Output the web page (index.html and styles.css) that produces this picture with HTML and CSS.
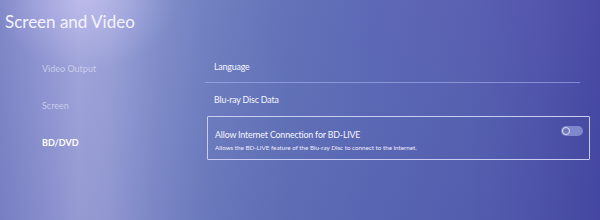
FILE: index.html
```html
<!DOCTYPE html>
<html>
<head>
<meta charset="utf-8">
<link rel="stylesheet" href="styles.css">
</head>
<body>
<div class="screen">
  <div class="glare"></div>
  <h1 class="title">Screen and Video</h1>
  <div class="main">
    <nav class="nav">
      <div class="nav-item">Video Output</div>
      <div class="nav-item">Screen</div>
      <div class="nav-item active">BD/DVD</div>
    </nav>
    <section class="content">
      <div class="row">Language</div>
      <div class="divider"></div>
      <div class="row row2">Blu-ray Disc Data</div>
      <div class="card">
        <div class="card-text">
          <div class="card-title">Allow Internet Connection for BD-LIVE</div>
          <div class="card-desc">Allows the BD-LIVE feature of the Blu-ray Disc to connect to the internet.</div>
        </div>
        <div class="toggle"><div class="knob"></div></div>
      </div>
    </section>
  </div>
</div>
</body>
</html>
```
FILE: styles.css
```css
html, body {
  margin: 0;
  padding: 0;
}
body {
  width: 600px;
  height: 220px;
  overflow: hidden;
  font-family: Lato, "Open Sans", sans-serif;
}
.screen {
  position: relative;
  width: 600px;
  height: 220px;
  overflow: hidden;
  background:
    linear-gradient(180deg, rgba(70,60,160,0) 0%, rgba(40,40,140,0.10) 100%),
    linear-gradient(90deg, #8088c8 0%, #939ad4 8%, #a2a7db 13%, #9ca3d8 18%, #8390cb 26%, #7080c0 35%, #6374b9 48%, #5d6cb6 62%, #5864b2 78%, #5157ab 90%, #474aa3 100%);
}
.glare {
  position: absolute;
  left: 0;
  top: 0;
  width: 600px;
  height: 220px;
  background:
    radial-gradient(ellipse 90px 70px at 85px 0px, rgba(215,205,250,0.5) 0%, rgba(215,205,250,0) 100%),
    radial-gradient(ellipse 260px 120px at 480px 0px, rgba(100,80,180,0.18) 0%, rgba(100,80,180,0) 100%);
  pointer-events: none;
}
.title {
  position: relative;
  margin: 0;
  padding: 10px 0 0 5px;
  font-size: 17px;
  line-height: 24px;
  font-weight: 400;
  color: #f4f3ff;
}
.main {
  position: relative;
  display: flex;
  margin-top: 16px;
}
.nav {
  width: 207px;
  padding-left: 42px;
  box-sizing: border-box;
  display: flex;
  flex-direction: column;
}
.nav-item {
  height: 37px;
  display: flex;
  align-items: center;
  font-size: 9px;
  color: #d4d5f0;
  opacity: 0.85;
}
.nav-item.active {
  color: #ffffff;
  opacity: 1;
  font-weight: 700;
}
.content {
  width: 383px;
  display: flex;
  flex-direction: column;
}
.row {
  height: 32px;
  padding-left: 7px;
  display: flex;
  align-items: center;
  font-size: 8.8px;
  letter-spacing: -0.15px;
  color: #f6f6ff;
}
.row2 {
  height: 33px;
}
.divider {
  height: 1px;
  margin-left: -2px;
  width: 375px;
  background: rgba(170,180,240,0.6);
}
.card {
  height: 44px;
  box-sizing: border-box;
  border: 1.5px solid #c9cdf2;
  border-radius: 1px;
  display: flex;
  justify-content: space-between;
  padding: 0 6px 0 7px;
}
.card-text {
  display: flex;
  flex-direction: column;
  padding-top: 11px;
}
.card-title {
  font-size: 8.8px;
  letter-spacing: -0.15px;
  line-height: 13px;
  color: #f6f6ff;
}
.card-desc {
  font-size: 6.25px;
  line-height: 10px;
  margin-top: 2px;
  color: #eeeefc;
}
.toggle {
  margin-top: 8.5px;
  width: 22px;
  height: 10px;
  border-radius: 5px;
  background: #7f88cc;
  display: flex;
  align-items: center;
  padding-left: 1px;
  box-sizing: border-box;
}
.knob {
  width: 8px;
  height: 8px;
  box-sizing: border-box;
  border-radius: 50%;
  background: #7178b8;
  border: 1.2px solid #dfe2fa;
}
```
